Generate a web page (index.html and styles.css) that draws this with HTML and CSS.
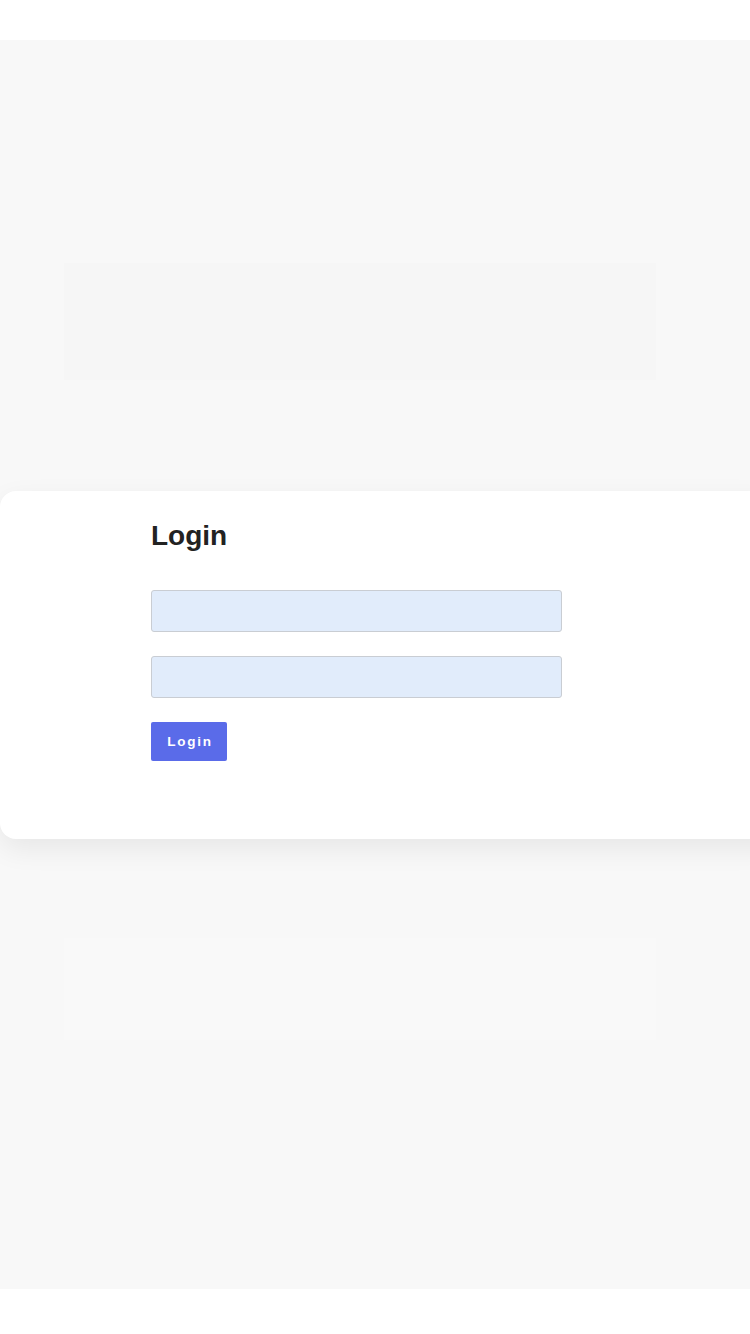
FILE: index.html
```html
<!DOCTYPE html>
<html lang="en">
<head>
<meta charset="utf-8">
<title>Login</title>
<link rel="stylesheet" href="styles.css">
</head>
<body>
<header class="topbar"></header>
<main class="stage">
  <div class="ghost ghost-top"></div>
  <section class="card">
    <h1 class="title">Login</h1>
    <form class="form">
      <input class="field" type="text" aria-label="Username">
      <input class="field" type="password" aria-label="Password">
      <button class="btn" type="button">Login</button>
    </form>
  </section>
  <div class="ghost ghost-bottom"></div>
</main>
<footer class="bottombar"></footer>
</body>
</html>
```
FILE: styles.css
```css
html, body {
  margin: 0;
  padding: 0;
  background: #ffffff;
  font-family: "Liberation Sans", Arial, sans-serif;
}
.topbar {
  height: 40px;
  background: #ffffff;
}
.stage {
  height: 1249px;
  background: #f8f8f8;
  overflow: hidden;
  display: flex;
  flex-direction: column;
}
.ghost {
  margin-left: 64px;
  width: 592px;
}
.ghost-top {
  margin-top: 223px;
  height: 117px;
  background: #f6f6f6;
}
.card {
  margin-top: 111px;
  margin-right: -30px;
  background: #ffffff;
  border-radius: 16px;
  box-shadow: 0 10px 28px rgba(0, 0, 0, 0.07);
  padding: 30px 0 78px 151px;
}
.title {
  margin: 0;
  font-size: 28px;
  line-height: 30px;
  font-weight: 700;
  color: #222222;
}
.form {
  margin-top: 39px;
  display: flex;
  flex-direction: column;
  align-items: flex-start;
  gap: 24px;
}
.field {
  box-sizing: border-box;
  width: 411px;
  height: 42px;
  margin: 0;
  background: #e1ecfb;
  border: 1px solid #c9cdd3;
  border-radius: 3px;
  outline: none;
}
.btn {
  box-sizing: border-box;
  width: 76px;
  height: 39px;
  margin: 0;
  padding: 0 0 0 2px;
  background: #5a6be9;
  border: none;
  border-radius: 2px;
  color: #ffffff;
  font-family: "Liberation Sans", Arial, sans-serif;
  font-size: 13.5px;
  font-weight: 700;
  letter-spacing: 1.8px;
}
.ghost-bottom {
  margin-top: 99px;
  height: 102px;
  background: #f9f9f9;
}
.bottombar {
  height: 45px;
  background: #ffffff;
}
```
